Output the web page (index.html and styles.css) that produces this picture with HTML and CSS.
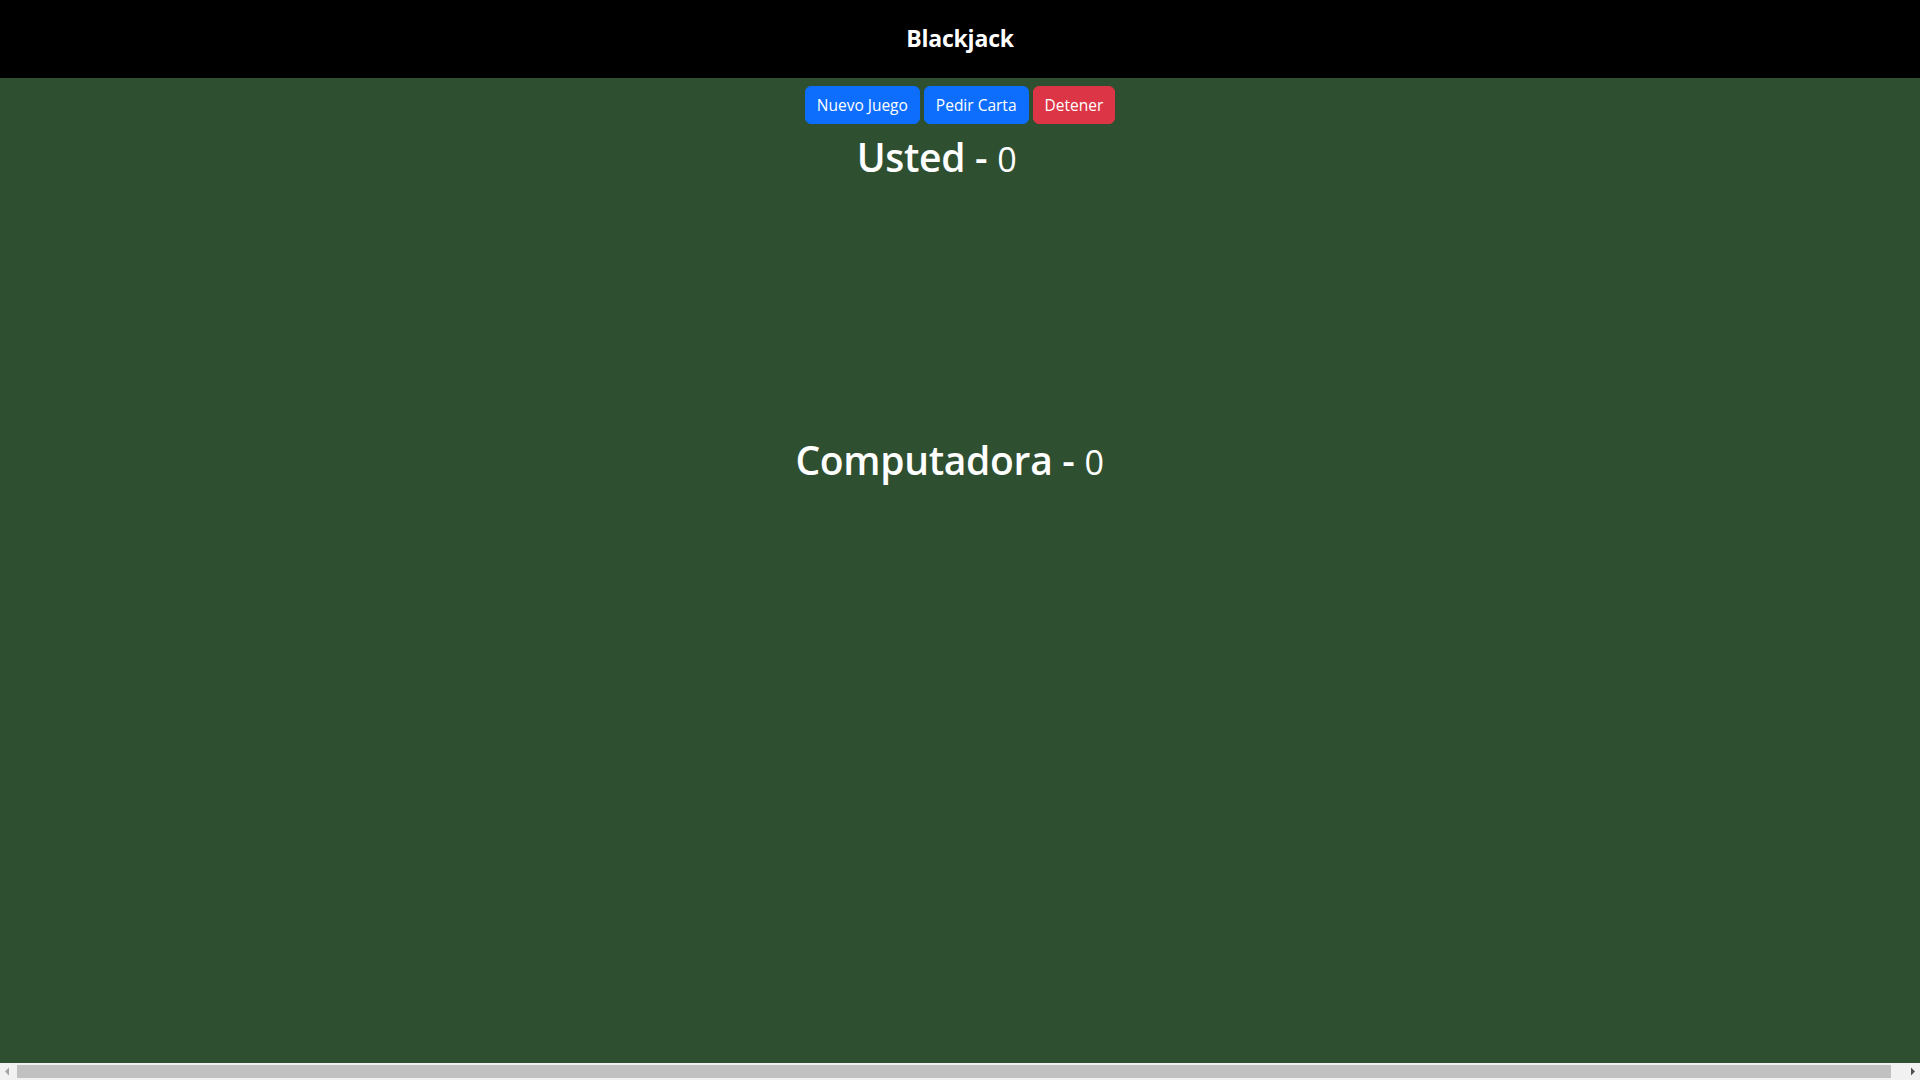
FILE: index.html
```html
<!DOCTYPE html>
<html lang="es">
<head>
<meta charset="utf-8">
<title>Blackjack</title>
<link rel="stylesheet" href="styles.css">
</head>
<body>
<header class="topbar">
  <h1 class="brand">Blackjack</h1>
</header>
<main class="row">
  <div class="col actions">
    <button class="btn btn-primary">Nuevo Juego</button>
    <button class="btn btn-primary">Pedir Carta</button>
    <button class="btn btn-danger">Detener</button>
  </div>
  <section class="col player">
    <h1 class="score score-player">Usted - <small>0</small></h1>
    <div class="cards"></div>
  </section>
  <section class="col player">
    <h1 class="score score-cpu">Computadora - <small>0</small></h1>
    <div class="cards"></div>
  </section>
</main>
<div class="hscroll" aria-hidden="true">
  <span class="hscroll-btn">
    <svg width="17" height="17" viewBox="0 0 17 17"><polygon points="5,8.5 9,4.5 9,12.5" fill="#a3a3a3"/></svg>
  </span>
  <span class="hscroll-track"><span class="hscroll-thumb"></span></span>
  <span class="hscroll-btn">
    <svg width="17" height="17" viewBox="0 0 17 17"><polygon points="12,8.5 8,4.5 8,12.5" fill="#505050"/></svg>
  </span>
</div>
</body>
</html>
```
FILE: styles.css
```css
html, body {
  margin: 0;
  padding: 0;
  background: #2f4f31;
  font-family: "Open Sans", "Noto Sans", sans-serif;
  color: #fff;
}
body {
  height: 100vh;
  display: flex;
  flex-direction: column;
  overflow: hidden;
}
.topbar {
  background: #000;
  height: 78px;
  flex: 0 0 78px;
  display: flex;
  justify-content: center;
  align-items: flex-start;
}
.brand {
  margin: 0;
  padding-top: 25px;
  font-size: 23px;
  line-height: 1.2;
  font-weight: 700;
  letter-spacing: -0.2px;
}
.row {
  flex: 1;
  display: flex;
  flex-direction: column;
  margin: 0 -12px;
  min-height: 0;
}
.col {
  padding: 0 12px;
  text-align: center;
}
.actions {
  display: flex;
  justify-content: center;
  gap: 4px;
  padding-top: 8px;
}
.btn {
  font-family: inherit;
  font-size: 15.5px;
  line-height: 1.5;
  height: 38px;
  padding: 1px 11px 0;
  border: 1px solid transparent;
  border-radius: 6px;
  color: #fff;
  cursor: pointer;
}
.btn-primary { background: #0d6efd; border-color: #0d6efd; }
.btn-danger { background: #dc3545; border-color: #dc3545; }
.score {
  margin: 10px 0 8px;
  font-size: 39px;
  line-height: 1.2;
  font-weight: 600;
  letter-spacing: -0.3px;
}
.score small {
  font-size: 0.875em;
  font-weight: 500;
}
.score-player { padding-right: 47px; }
.score-cpu { padding-right: 21px; margin-top: 0; }
.cards {
  height: 248px;
}
.hscroll {
  flex: 0 0 17px;
  display: flex;
  background: #f1f1f1;
}
.hscroll-btn {
  width: 17px;
  height: 17px;
  display: block;
}
.hscroll-btn svg { display: block; }
.hscroll-track {
  flex: 1;
  display: flex;
  padding: 2px 12px 2px 0;
}
.hscroll-thumb {
  flex: 1;
  background: #c1c1c1;
}
```
